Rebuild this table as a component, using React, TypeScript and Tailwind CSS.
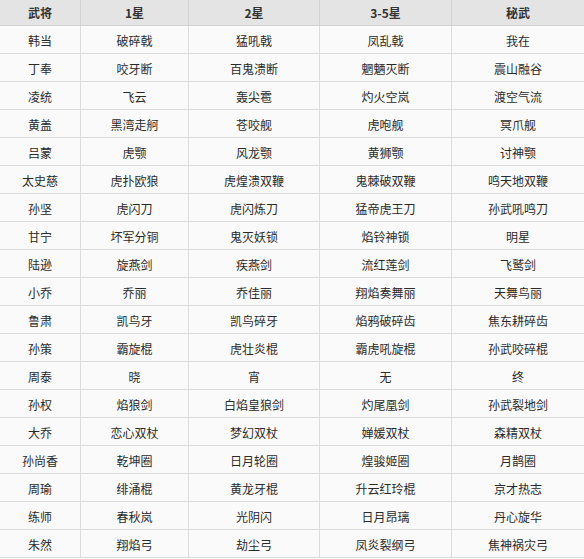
import React from 'react';

const headers = ['武将', '1星', '2星', '3-5星', '秘武'];

const rows: string[][] = [
  ['韩当', '破碎戟', '猛吼戟', '凤乱戟', '我在'],
  ['丁奉', '咬牙断', '百鬼溃断', '魍魉灭断', '震山融谷'],
  ['凌统', '飞云', '轰尖雹', '灼火空岚', '渡空气流'],
  ['黄盖', '黑湾走舸', '苍咬舰', '虎咆舰', '冥爪舰'],
  ['吕蒙', '虎颚', '风龙颚', '黄狮颚', '讨神颚'],
  ['太史慈', '虎扑欧狼', '虎煌溃双鞭', '鬼棘破双鞭', '鸣天地双鞭'],
  ['孙坚', '虎闪刀', '虎闪炼刀', '猛帝虎王刀', '孙武吼鸣刀'],
  ['甘宁', '坏军分铜', '鬼灭妖锁', '焰铃神锁', '明星'],
  ['陆逊', '旋燕剑', '疾燕剑', '流红莲剑', '飞鹫剑'],
  ['小乔', '乔丽', '乔佳丽', '翔焰奏舞丽', '天舞鸟丽'],
  ['鲁肃', '凯鸟牙', '凯鸟碎牙', '焰鸦破碎齿', '焦东耕碎齿'],
  ['孙策', '霸旋棍', '虎壮炎棍', '霸虎吼旋棍', '孙武咬碎棍'],
  ['周泰', '晓', '宵', '无', '终'],
  ['孙权', '焰狼剑', '白焰皇狼剑', '灼尾凰剑', '孙武裂地剑'],
  ['大乔', '恋心双杖', '梦幻双杖', '婵媛双杖', '森精双杖'],
  ['孙尚香', '乾坤圈', '日月轮圈', '煌骏姬圈', '月鹊圈'],
  ['周瑜', '绯涌棍', '黄龙牙棍', '升云红玲棍', '京才热志'],
  ['练师', '春秋岚', '光阴闪', '日月昂璃', '丹心旋华'],
  ['朱然', '翔焰弓', '劫尘弓', '凤炎裂纲弓', '焦神祸灾弓'],
];

const App = () => {
  return (
    <div className="w-[584px] h-[559px] overflow-hidden bg-[#fafafa] font-['Noto_Sans_CJK_SC','Noto_Sans',sans-serif] text-[12px] text-[#2a2a2a]">
      <div className="grid grid-cols-[81px_108px_131px_132px_132px]">
        {headers.map((h, i) => (
          <div
            key={h}
            className={`h-[26px] flex items-center justify-center bg-[#e4e4e4] font-bold text-[#333] border-b border-[#d2d2d2] ${i < 4 ? 'border-r' : ''}`}
          >
            {h}
          </div>
        ))}
        {rows.map((row, r) =>
          row.map((cell, c) => (
            <div
              key={`${r}-${c}`}
              className={`h-[28px] pt-[2px] flex items-center justify-center border-b border-[#dcdcdc] ${c < 4 ? 'border-r' : ''}`}
            >
              {cell}
            </div>
          ))
        )}
      </div>
    </div>
  );
};

export default App;
